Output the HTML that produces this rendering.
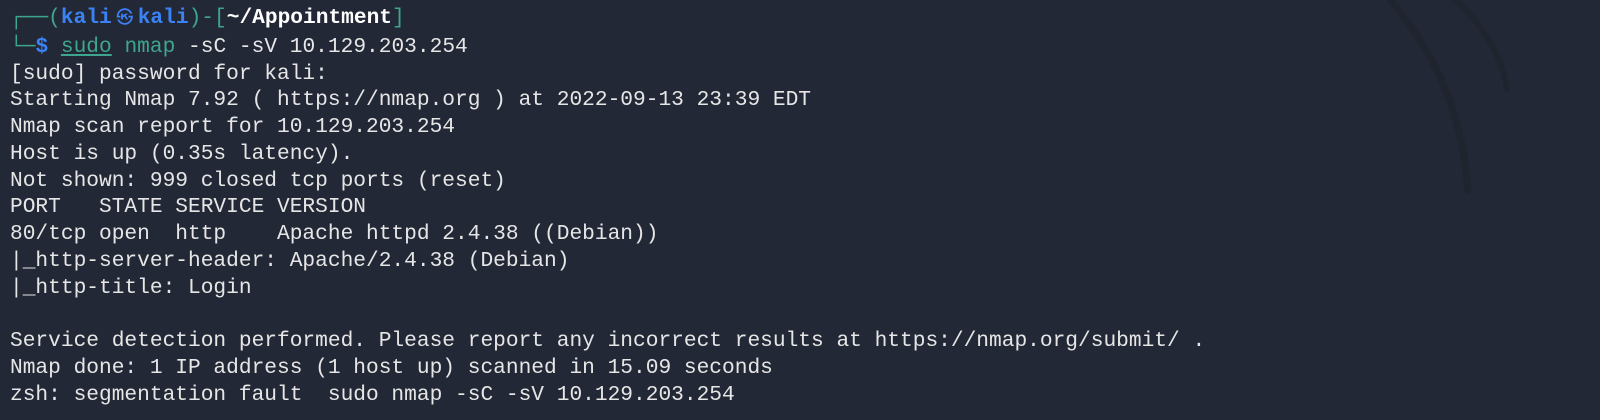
<!DOCTYPE html>
<html><head><style>
html,body{margin:0;padding:0;width:1600px;height:420px;overflow:hidden;background:#232836;}
pre{position:absolute;left:10px;top:5px;margin:0;font-family:"Liberation Mono",monospace;font-size:21.2px;line-height:26.75px;color:#e6e6e6;white-space:pre;}
.g{color:#3ea58f}.b{color:#3b82f6;font-weight:bold}.w{color:#fff;font-weight:bold}.u{text-decoration:underline}
.k{display:inline-block;width:26px;text-align:center;font-size:17px;font-weight:normal}
svg{position:absolute;left:0;top:0}
</style></head><body>
<svg width="1600" height="420"><path d="M1390 0 Q1460 80 1468 190" stroke="#20242f" stroke-width="7" fill="none" stroke-linecap="round"/><path d="M1455 0 Q1500 40 1507 90" stroke="#20242f" stroke-width="6" fill="none" stroke-linecap="round"/></svg>
<pre><span class="g">┌──(</span><span class="b">kali<span class="k">㉿</span>kali</span><span class="g">)-[</span><span class="w">~/Appointment</span><span class="g">]</span>
<span class="g">└─</span><span class="b">$</span> <span class="g u">sudo</span> <span class="g">nmap</span> -sC -sV 10.129.203.254
[sudo] password for kali: 
Starting Nmap 7.92 ( https://nmap.org ) at 2022-09-13 23:39 EDT
Nmap scan report for 10.129.203.254
Host is up (0.35s latency).
Not shown: 999 closed tcp ports (reset)
PORT   STATE SERVICE VERSION
80/tcp open  http    Apache httpd 2.4.38 ((Debian))
|_http-server-header: Apache/2.4.38 (Debian)
|_http-title: Login

Service detection performed. Please report any incorrect results at https://nmap.org/submit/ .
Nmap done: 1 IP address (1 host up) scanned in 15.09 seconds
zsh: segmentation fault  sudo nmap -sC -sV 10.129.203.254</pre>
</body></html>
